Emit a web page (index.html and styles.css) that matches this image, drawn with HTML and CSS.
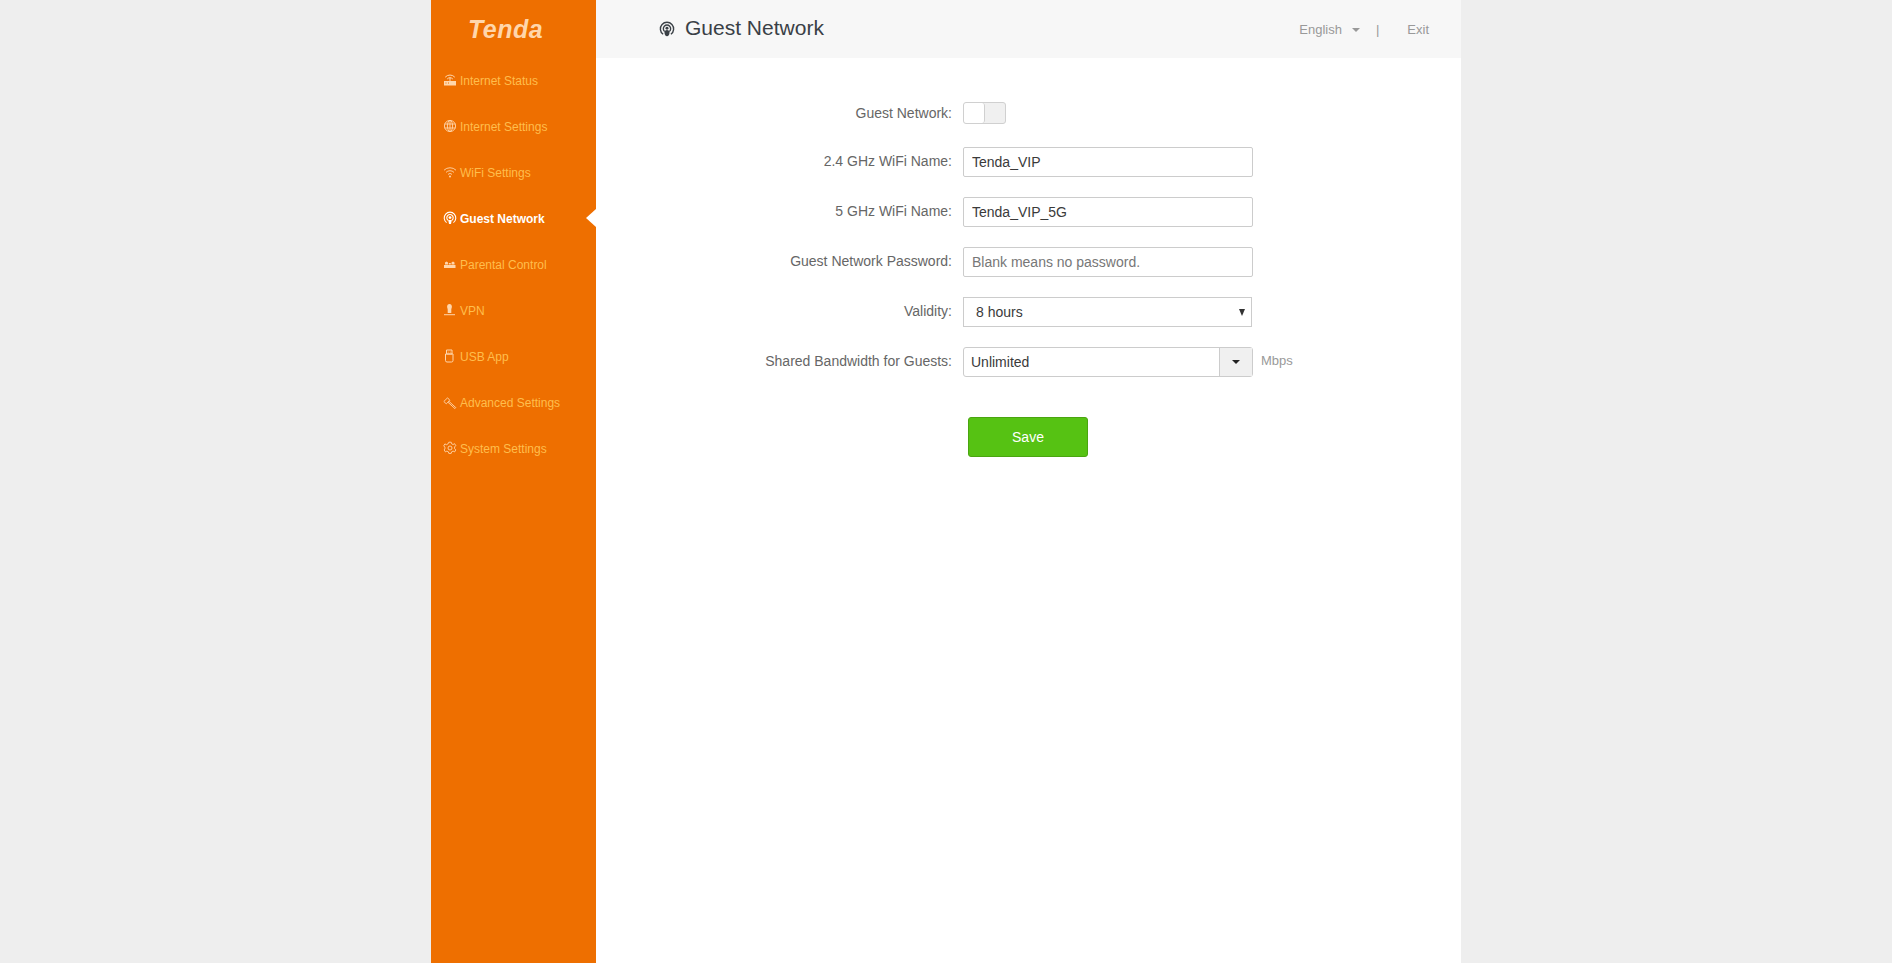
FILE: index.html
```html
<!DOCTYPE html>
<html lang="en">
<head>
  <meta charset="UTF-8" />
  <title>Guest Network</title>
  <link rel="stylesheet" href="styles.css">
</head>
<body>

<div class="page">

  <!-- Left menu -->
  <nav class="sidebar">
    <div class="logo">Tenda</div>
    <ul class="menu">
      <li class="menu-item">
        <svg class="menu-icon" viewBox="0 0 14 14"><path d="M2.200 4.200a6.400 6.400 0 0 1 9.600 0M4.200 6a3.800 3.800 0 0 1 5.600 0" fill="none" stroke="currentColor"/><path d="M6.500 4.500h1V8h-1z" fill="currentColor"/><path d="M1 8h12v4.500H1zM2.500 9.500v1h1v-1zM5 9.500v1h1v-1z" fill="currentColor" fill-rule="evenodd"/></svg>
        <span>Internet Status</span>
      </li>
      <li class="menu-item">
        <svg class="menu-icon" viewBox="0 0 14 14"><g fill="none" stroke="currentColor" stroke-width="0.9"><circle cx="7" cy="7" r="5.600"/><ellipse cx="7" cy="7" rx="2.600" ry="5.600"/><path d="M1.600 5h10.800M1.600 9h10.800M7 1.400v11.200"/></g></svg>
        <span>Internet Settings</span>
      </li>
      <li class="menu-item">
        <svg class="menu-icon" viewBox="0 0 14 14"><g fill="none" stroke="currentColor" stroke-width="0.9"><path d="M1 5.200a8.600 8.600 0 0 1 12 0M3 7.400a5.600 5.600 0 0 1 8 0M5 9.400a2.800 2.800 0 0 1 4 0"/></g><circle cx="7" cy="11.400" r="1" fill="currentColor"/></svg>
        <span>WiFi Settings</span>
      </li>
      <li class="menu-item active">
        <svg class="menu-icon" viewBox="0 0 14 14"><g fill="none" stroke="currentColor" stroke-width="1.100"><path d="M3.600 11.600a5.800 5.800 0 1 1 6.800 0"/><path d="M5 9.200a3.200 3.200 0 1 1 4 0"/></g><circle cx="7" cy="6.600" r="1.400" fill="currentColor"/><path d="M5.200 9h3.600l-.8 4H6z" fill="currentColor"/></svg>
        <span>Guest Network</span>
      </li>
      <li class="menu-item">
        <svg class="menu-icon" viewBox="0 0 14 14"><g fill="currentColor"><rect x="1" y="8" width="11.500" height="3"/><path d="M2 7.500V5.500l1.500-1 1.500 1v2zM8.500 7.500V5.500l1.500-1 1.500 1v2z"/><rect x="5.800" y="6" width="2" height="1.500"/></g></svg>
        <span>Parental Control</span>
      </li>
      <li class="menu-item">
        <svg class="menu-icon" viewBox="0 0 14 14"><g fill="currentColor"><path d="M6.500 1c1.600 0 2.400 1.200 2.400 2.800 0 1.200-.6 1.800-.6 3V10H4.700V6.800c0-1.200-.6-1.800-.6-3C4.100 2.200 4.900 1 6.500 1z"/><path d="M1 11.200h11v1H1z"/></g></svg>
        <span>VPN</span>
      </li>
      <li class="menu-item">
        <svg class="menu-icon" viewBox="0 0 14 14"><g fill="none" stroke="currentColor"><path d="M3.500 1h5.500v4H3.500zM2.500 5h7.500v6.500a1.500 1.500 0 0 1-1.500 1.500H4a1.500 1.500 0 0 1-1.500-1.500zM5.200 2.700v.8M7.300 2.700v.8"/></g></svg>
        <span>USB App</span>
      </li>
      <li class="menu-item">
        <svg class="menu-icon" viewBox="0 0 14 14"><g fill="none" stroke="currentColor" stroke-width="0.9"><path d="M5.800 6.200l7 6.400-.9 1-6.900-6.300"/><path d="M.8 6.500L4.600 2.800l2.200 2.500-3.500 3.500z"/></g></svg>
        <span>Advanced Settings</span>
      </li>
      <li class="menu-item">
        <svg class="menu-icon" viewBox="0 0 14 14"><g fill="none" stroke="currentColor" stroke-width="0.9"><path d="M5.800 1.200h2.400l.4 1.600 1.500.7 1.500-.8 1.200 2-1.200 1.200v1.800l1.200 1.200-1.200 2-1.500-.8-1.500.7-.4 1.600H5.800l-.4-1.600-1.500-.7-1.500.8-1.200-2L1.900 7.900V6.100L.7 4.900l1.200-2 1.500.8 1.500-.7z"/><circle cx="7" cy="7" r="2"/></g></svg>
        <span>System Settings</span>
      </li>
    </ul>
  </nav>

  <div class="content">
    <header class="topbar">
      <h1 class="title">
        <svg class="title-icon" viewBox="0 0 14 14"><g fill="none" stroke="currentColor" stroke-width="1.200"><path d="M3.600 11.600a5.800 5.800 0 1 1 6.800 0"/><path d="M5 9.200a3.200 3.200 0 1 1 4 0"/></g><circle cx="7" cy="6.400" r="1.300" fill="currentColor"/><path d="M4.800 10a2.200 2.200 0 1 1 4.400 0c0 1.600-1 3.400-2.200 3.400S4.800 11.600 4.800 10z" fill="currentColor"/></svg>
        <span class="title-text">Guest Network</span>
      </h1>
      <div class="top-links">
        <span class="lang">English<i class="lang-caret"></i></span>
        <span class="top-sep">|</span>
        <span class="exit">Exit</span>
      </div>
    </header>

    <form class="form">
      <div class="row row-toggle">
        <label class="row-label">Guest Network:</label>
        <div class="toggle"><div class="toggle-knob"></div></div>
      </div>
      <div class="row">
        <label class="row-label">2.4 GHz WiFi Name:</label>
        <input class="field" type="text" value="Tenda_VIP">
      </div>
      <div class="row">
        <label class="row-label">5 GHz WiFi Name:</label>
        <input class="field" type="text" value="Tenda_VIP_5G">
      </div>
      <div class="row">
        <label class="row-label">Guest Network Password:</label>
        <input class="field" type="text" placeholder="Blank means no password.">
      </div>
      <div class="row">
        <label class="row-label">Validity:</label>
        <div class="select"><span>8 hours</span><i class="select-arrow"></i></div>
      </div>
      <div class="row">
        <label class="row-label">Shared Bandwidth for Guests:</label>
        <div class="combo">
          <input class="combo-input" type="text" value="Unlimited">
          <div class="combo-btn"><i class="caret"></i></div>
        </div>
        <span class="unit">Mbps</span>
      </div>
      <button class="save" type="button">Save</button>
    </form>
  </div>
</div>

</body>
</html>
```

FILE: styles.css
```css
* {
  box-sizing: border-box;
}

body {
  margin: 0;
  padding: 0;
  background: #eeeeee;
  font-family: "Liberation Sans", Arial, sans-serif;
  font-size: 14px;
  color: #555;
}

.page {
  display: flex;
  width: 1030px;
  height: 963px;
  margin-left: 431px;
  background: white;
}

/* sidebar */
.sidebar {
  width: 165px;
  flex-shrink: 0;
  background: #ee6f00;
}

.logo {
  height: 57px;
  padding-top: 15px;
  padding-left: 37px;
  font-size: 25px;
  line-height: 28px;
  font-weight: bold;
  font-style: italic;
  letter-spacing: 0.5px;
  color: #ffd6ab;
}

.menu {
  list-style: none;
  margin: 0;
  padding: 0;
}

.menu-item {
  position: relative;
  display: flex;
  align-items: center;
  height: 46px;
  padding-left: 12px;
  font-size: 12px;
  color: #ffbe4d;
}

.menu-item span {
  padding-top: 2px;
}

.menu-item.active {
  color: white;
  font-weight: bold;
}

.menu-item.active::after {
  content: "";
  position: absolute;
  right: 0;
  top: 14px;
  border: 9px solid transparent;
  border-right: 10px solid white;
  border-left: 0;
}

.menu-icon {
  width: 14px;
  height: 14px;
  margin-right: 3px;
  color: #ffd6ab;
}

.menu-item.active .menu-icon {
  color: white;
}

/* top bar */
.content {
  flex: 1;
}

.topbar {
  display: flex;
  align-items: center;
  justify-content: space-between;
  height: 58px;
  padding: 0 32px 0 63px;
  background: #f7f7f7;
}

.title {
  display: flex;
  align-items: center;
  margin: 0;
  font-size: 21px;
  font-weight: normal;
  color: #3a4046;
}

.title-text {
  padding-bottom: 2px;
}

.title-icon {
  width: 16px;
  height: 16px;
  margin-right: 10px;
}

.top-links {
  display: flex;
  align-items: center;
  font-size: 13px;
  color: #999;
}

.lang-caret {
  display: inline-block;
  margin-left: 10px;
  vertical-align: middle;
  border-top: 4px solid #999;
  border-left: 4px solid transparent;
  border-right: 4px solid transparent;
}

.top-sep {
  margin-left: 16px;
  margin-right: 28px;
}

/* form */
.form {
  padding-top: 39px;
}

.row {
  display: flex;
  align-items: center;
  height: 30px;
  margin-bottom: 20px;
}

.row-toggle {
  height: 32px;
  margin-bottom: 18px;
}

.row-label {
  width: 356px;
  margin-right: 11px;
  padding-bottom: 2px;
  text-align: right;
  color: #666;
}

.row-toggle .row-label {
  padding-bottom: 0;
}

.toggle {
  width: 43px;
  height: 22px;
  background: #f0f0f0;
  border: 1px solid #d0d0d0;
  border-radius: 3px;
}

.toggle-knob {
  width: 21px;
  height: 20px;
  background: white;
  border-right: 1px solid #d0d0d0;
  border-radius: 3px;
}

.field {
  width: 290px;
  height: 30px;
  padding: 0 8px;
  border: 1px solid #ccc;
  border-radius: 2px;
  font-family: inherit;
  font-size: 14px;
  color: #3a3a3a;
}

.field::placeholder {
  color: #777;
}

.select {
  display: flex;
  align-items: center;
  justify-content: space-between;
  width: 289px;
  height: 30px;
  padding: 0 6px 0 12px;
  border: 1px solid #ccc;
  color: #3a3a3a;
}

.select-arrow {
  border-top: 7px solid #333;
  border-left: 3px solid transparent;
  border-right: 3px solid transparent;
}

.combo {
  display: flex;
  width: 290px;
  height: 30px;
  border: 1px solid #ccc;
  border-radius: 3px;
}

.combo-input {
  flex: 1;
  min-width: 0;
  padding: 0 7px;
  border: 0;
  background: none;
  font-family: inherit;
  font-size: 14px;
  color: #3a3a3a;
}

.combo-btn {
  display: flex;
  align-items: center;
  justify-content: center;
  width: 33px;
  background: #f0f0f0;
  border-left: 1px solid #ccc;
}

.caret {
  border-top: 4px solid #222;
  border-left: 4px solid transparent;
  border-right: 4px solid transparent;
}

.unit {
  margin-left: 8px;
  padding-bottom: 3px;
  font-size: 13px;
  color: #999;
}

.save {
  display: block;
  width: 120px;
  height: 40px;
  margin: 40px 0 0 372px;
  background: #56c213;
  border: 1px solid #4aa510;
  border-radius: 3px;
  font-family: inherit;
  font-size: 14px;
  color: white;
}
```
